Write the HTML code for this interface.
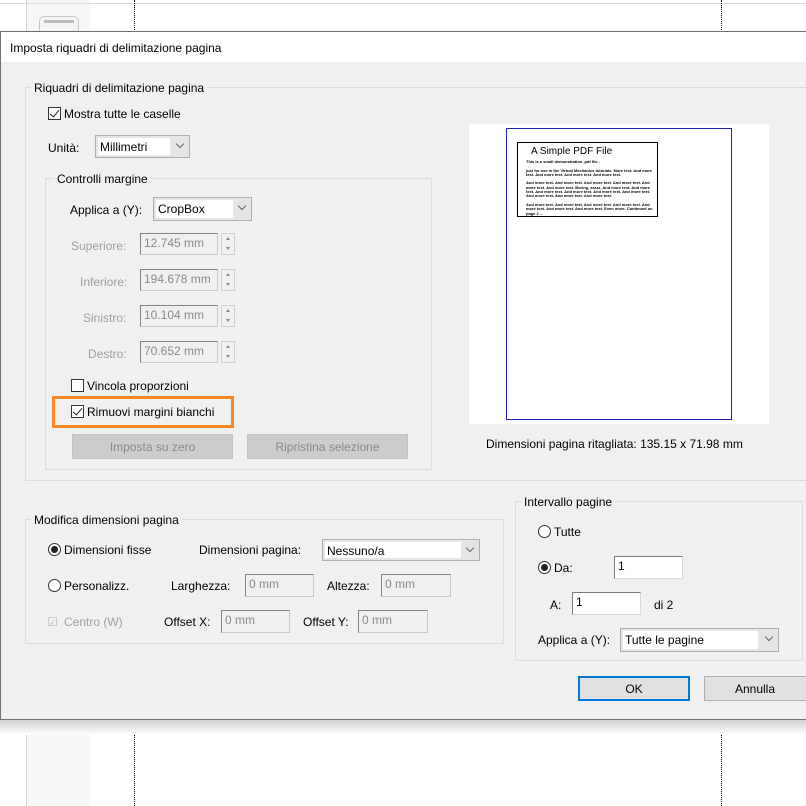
<!DOCTYPE html>
<html><head><meta charset="utf-8"><style>
*{box-sizing:border-box}
body{margin:0;width:806px;height:806px;overflow:hidden;background:#fff;font-family:"Liberation Sans",sans-serif;font-size:12px;color:#000;position:relative}
.a{position:absolute;white-space:nowrap}
.t1{margin-top:1px}
.g{position:absolute;border:1px solid #dcdcdc}
.gl{position:absolute;background:#f0f0f0;padding:0 3px;white-space:nowrap;margin-top:1px}
.dis{color:#a0a0a0}
.inp{position:absolute;background:#f0f0f0;border:1px solid #c8c8c8;border-top-color:#838383;border-left-color:#838383;color:#8a8a8a;padding:2px 3px;font-size:12px;line-height:15px}
.inpw{position:absolute;background:#fff;border:1px solid #d8d8d8;border-top-color:#7a7a7a;border-left-color:#7a7a7a;padding:2px 3px;line-height:15px}
.cb{position:absolute;border:1px solid #adadad;background:#e5e5e5}
.cb .t{position:absolute;left:2px;top:2px;bottom:2px;background:#fff;padding:2px 2px;line-height:15px}
.cb .v{position:absolute;right:6px;top:5px;width:6px;height:6px;border-right:1px solid #666;border-bottom:1px solid #666;transform:rotate(45deg)}
.chk{position:absolute;width:13px;height:13px;border:1px solid #333;background:#fff}
.chk.on::after{content:"";position:absolute;left:3px;top:0px;width:4px;height:8px;border-right:1.5px solid #222;border-bottom:1.5px solid #222;transform:rotate(40deg)}
.rad{position:absolute;width:13px;height:13px;border:1px solid #333;border-radius:50%;background:#fff}
.rad.on::after{content:"";position:absolute;left:2px;top:2px;width:7px;height:7px;border-radius:50%;background:#222}
.spin{position:absolute;width:14px;height:22px;border:1px solid #d0d0d0;background:#f0f0f0}
.spin::before{content:"";position:absolute;left:4px;top:3px;border:2.5px solid transparent;border-bottom:3px solid #888;border-top:none}
.spin::after{content:"";position:absolute;left:4px;top:13px;border:2.5px solid transparent;border-top:3px solid #888;border-bottom:none}
.btn{position:absolute;background:#cccccc;border:1px solid #c4c4c4;color:#8a8a8a;text-align:center;line-height:24px}
.dot{position:absolute;width:0;border-left:1px dotted #000}
</style></head><body>
<!-- background -->
<div class="a" style="left:26px;top:0;width:64px;height:806px;background:#f7f7f7;border-left:1px solid #d0d0d0"></div>
<div class="a" style="left:0;top:3px;width:806px;height:1px;background:#dcdcdc"></div>
<div class="a" style="left:39px;top:16px;width:40px;height:18px;border:1px solid #c8c8c8;border-radius:5px;background:#f4f4f4"></div>
<div class="a" style="left:44px;top:20px;width:30px;height:3px;background:#bdbdbd"></div>
<div class="dot" style="left:134px;top:0;height:806px"></div>
<div class="dot" style="left:721px;top:0;height:806px"></div>
<div class="a" style="left:0;top:719px;width:806px;height:16px;background:linear-gradient(#d0d0d0,#fff)"></div>

<!-- dialog -->
<div class="a" style="left:0;top:31px;width:806px;height:689px;background:#f0f0f0;border:1px solid #707070;border-right:none"></div>
<div class="a" style="left:1px;top:32px;width:805px;height:30px;background:#fff"></div>
<div class="a t1" style="left:10px;top:40px">Imposta riquadri di delimitazione pagina</div>

<!-- group 1 -->
<div class="g" style="left:25px;top:87px;width:800px;height:394px"></div>
<div class="gl" style="left:31px;top:80px">Riquadri di delimitazione pagina</div>
<div class="chk on" style="left:48px;top:107px"></div>
<div class="a t1" style="left:64px;top:106px">Mostra tutte le caselle</div>
<div class="a t1" style="left:48px;top:140px">Unità:</div>
<div class="cb" style="left:95px;top:135px;width:95px;height:23px"><div class="t" style="width:72px">Millimetri</div><div class="v"></div></div>

<div class="g" style="left:45px;top:178px;width:387px;height:292px"></div>
<div class="gl" style="left:54px;top:171px">Controlli margine</div>
<div class="a t1" style="left:70px;top:202px">Applica a (Y):</div>
<div class="cb" style="left:153px;top:197px;width:99px;height:24px"><div class="t" style="width:77px">CropBox</div><div class="v"></div></div>

<div class="a dis t1" style="left:71px;top:238px">Superiore:</div>
<div class="inp" style="left:140px;top:233px;width:78px;height:22px">12.745 mm</div>
<div class="spin" style="left:221px;top:233px"></div>
<div class="a dis t1" style="left:80px;top:274px">Inferiore:</div>
<div class="inp" style="left:140px;top:269px;width:78px;height:22px">194.678 mm</div>
<div class="spin" style="left:221px;top:269px"></div>
<div class="a dis t1" style="left:83px;top:310px">Sinistro:</div>
<div class="inp" style="left:140px;top:305px;width:78px;height:22px">10.104 mm</div>
<div class="spin" style="left:221px;top:305px"></div>
<div class="a dis t1" style="left:88px;top:346px">Destro:</div>
<div class="inp" style="left:140px;top:341px;width:78px;height:22px">70.652 mm</div>
<div class="spin" style="left:221px;top:341px"></div>

<div class="chk" style="left:71px;top:379px"></div>
<div class="a t1" style="left:87px;top:378px">Vincola proporzioni</div>
<div class="a" style="left:52px;top:396px;width:182px;height:32px;border:3px solid #f5891f"></div>
<div class="chk on" style="left:71px;top:405px"></div>
<div class="a t1" style="left:87px;top:404px">Rimuovi margini bianchi</div>
<div class="btn" style="left:72px;top:434px;width:161px;height:25px">Imposta su zero</div>
<div class="btn" style="left:247px;top:434px;width:161px;height:25px">Ripristina selezione</div>

<!-- preview -->
<div class="a" style="left:469px;top:124px;width:300px;height:300px;background:#fff"></div>
<div class="a" style="left:506px;top:128px;width:226px;height:292px;border:1px solid #2222aa"></div>
<div class="a" style="left:517px;top:142px;width:141px;height:75px;border:1px solid #000;overflow:hidden;font-size:4px;line-height:4.3px;padding:2px 4px;white-space:normal">
<div style="font-size:10px;line-height:13px;margin-left:9px">A Simple PDF File</div>
<div style="margin:2px 0 0 4px;font-weight:bold;color:#000">This is a small demonstration .pdf file -<br><br>just for use in the Virtual Mechanics tutorials. More text. And more text. And more text. And more text. And more text.<br><br>And more text. And more text. And more text. And more text. And more text. And more text. Boring, zzzzz. And more text. And more text. And more text. And more text. And more text. And more text. And more text. And more text. And more text.<br><br>And more text. And more text. And more text. And more text. And more text. And more text. And more text. Even more. Continued on page 2 ...</div></div>
<div class="a t1" style="left:486px;top:436px">Dimensioni pagina ritagliata: 135.15 x 71.98 mm</div>

<!-- group 2 -->
<div class="g" style="left:25px;top:519px;width:479px;height:125px"></div>
<div class="gl" style="left:31px;top:512px">Modifica dimensioni pagina</div>
<div class="rad on" style="left:48px;top:543px"></div>
<div class="a t1" style="left:64px;top:542px">Dimensioni fisse</div>
<div class="a t1" style="left:199px;top:542px">Dimensioni pagina:</div>
<div class="cb" style="left:322px;top:539px;width:158px;height:22px"><div class="t" style="width:136px;top:2px">Nessuno/a</div><div class="v"></div></div>
<div class="rad" style="left:48px;top:579px"></div>
<div class="a t1" style="left:64px;top:578px">Personalizz.</div>
<div class="a t1" style="left:171px;top:578px">Larghezza:</div>
<div class="inp" style="left:245px;top:574px;width:69px;height:23px">0 mm</div>
<div class="a t1" style="left:327px;top:578px">Altezza:</div>
<div class="inp" style="left:381px;top:574px;width:70px;height:23px">0 mm</div>
<div class="a dis t1" style="left:47px;top:614px;color:#bbb">☑</div>
<div class="a dis t1" style="left:64px;top:614px">Centro (W)</div>
<div class="a t1" style="left:164px;top:614px">Offset X:</div>
<div class="inp" style="left:221px;top:610px;width:69px;height:23px">0 mm</div>
<div class="a t1" style="left:303px;top:614px">Offset Y:</div>
<div class="inp" style="left:358px;top:610px;width:70px;height:23px">0 mm</div>

<!-- group 3 -->
<div class="g" style="left:515px;top:501px;width:288px;height:160px"></div>
<div class="gl" style="left:521px;top:494px">Intervallo pagine</div>
<div class="rad" style="left:538px;top:525px"></div>
<div class="a t1" style="left:554px;top:524px">Tutte</div>
<div class="rad on" style="left:538px;top:561px"></div>
<div class="a t1" style="left:554px;top:560px">Da:</div>
<div class="inpw" style="left:614px;top:556px;width:69px;height:23px">1</div>
<div class="a t1" style="left:550px;top:597px">A:</div>
<div class="inpw" style="left:572px;top:592px;width:69px;height:23px">1</div>
<div class="a t1" style="left:654px;top:597px">di 2</div>
<div class="a t1" style="left:538px;top:632px">Applica a (Y):</div>
<div class="cb" style="left:620px;top:628px;width:159px;height:24px"><div class="t" style="width:135px">Tutte le pagine</div><div class="v"></div></div>

<div class="a" style="left:578px;top:676px;width:112px;height:25px;border:2px solid #0078d7;background:#e1e1e1;text-align:center;line-height:23px">OK</div>
<div class="a" style="left:704px;top:676px;width:110px;height:25px;border:1px solid #adadad;background:#e1e1e1;text-align:center;line-height:25px;padding-right:8px">Annulla</div>
</body></html>
